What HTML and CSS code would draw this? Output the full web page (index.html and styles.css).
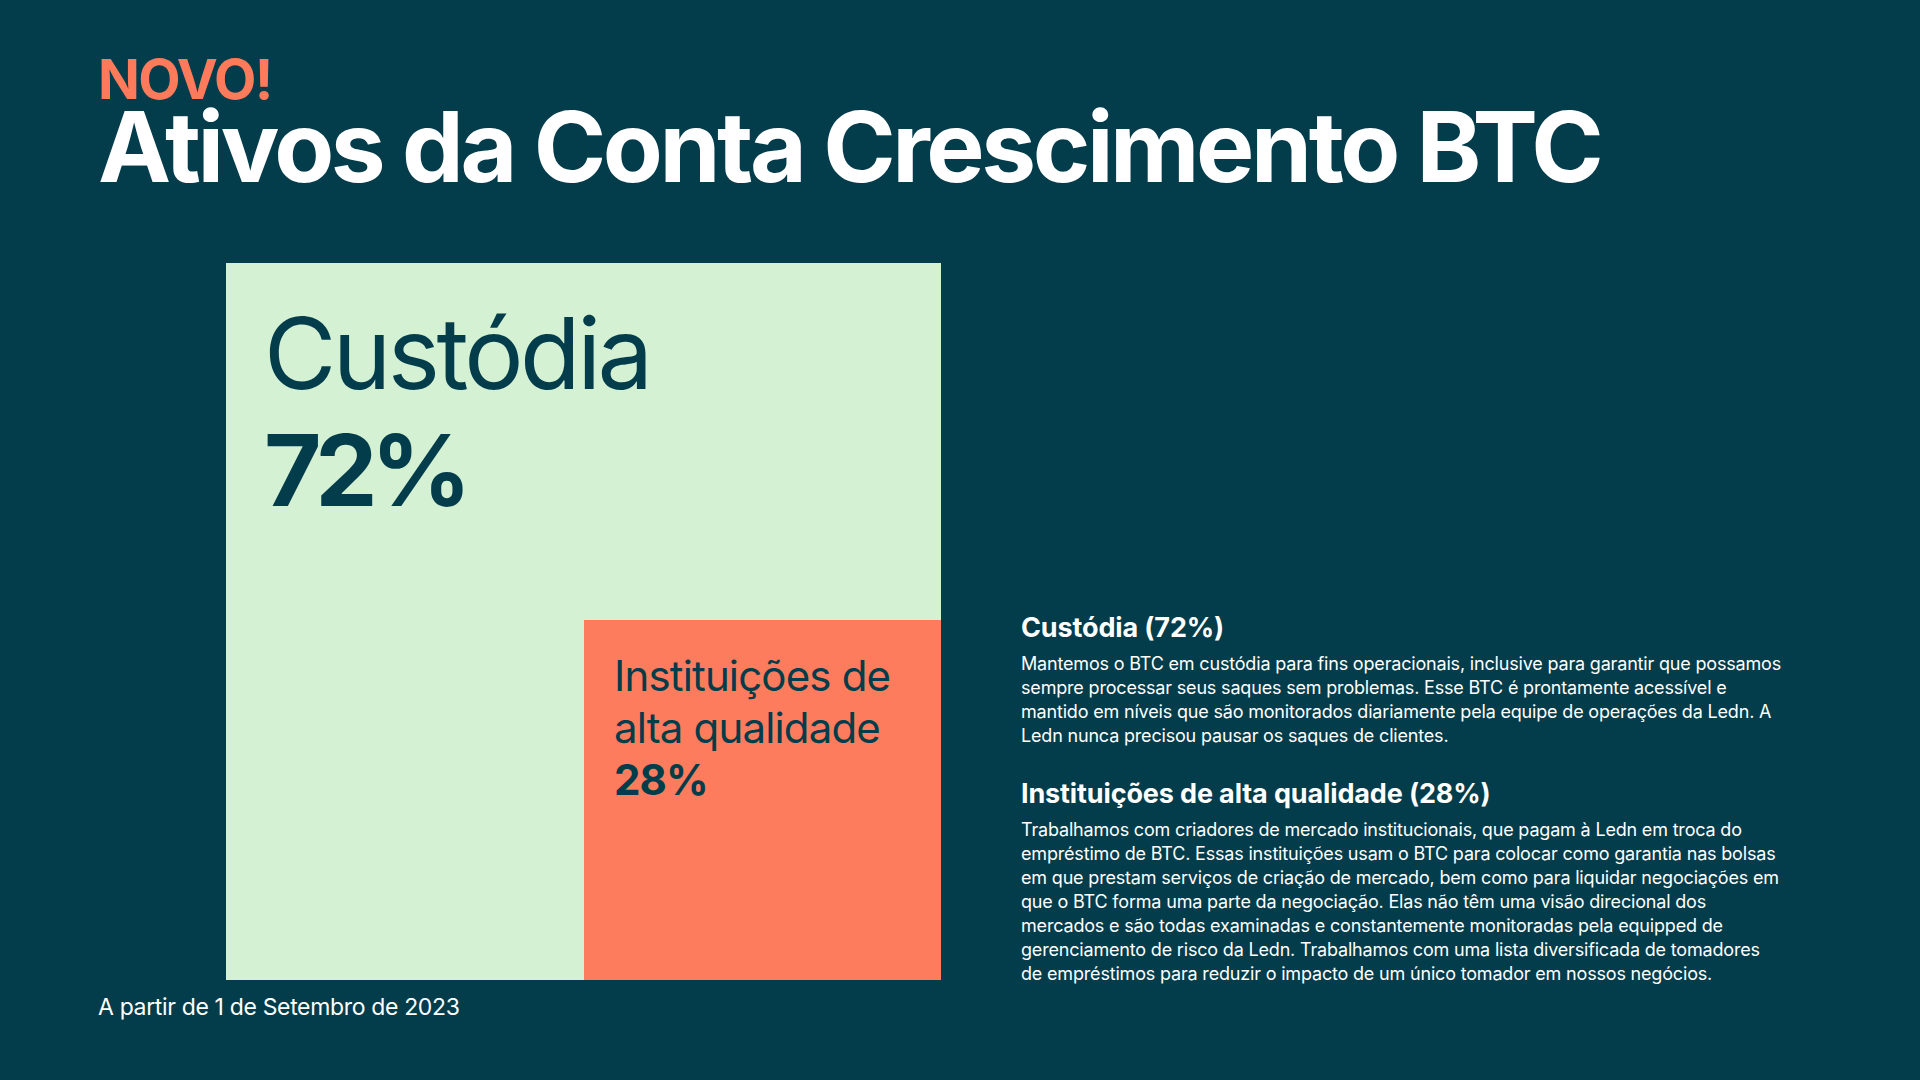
FILE: index.html
```html
<!DOCTYPE html>
<html lang="pt-BR">
<head>
<meta charset="utf-8">
<title>Ativos da Conta Crescimento BTC</title>
<link rel="stylesheet" href="styles.css">
</head>
<body>
<div class="page">
  <header class="header">
    <div class="badge">NOVO!</div>
    <h1 class="title">Ativos da Conta Crescimento BTC</h1>
  </header>
  <main class="main">
    <div class="chart">
      <div class="custody-label">
        <div class="label-name">Custódia</div>
        <div class="label-pct">72%</div>
      </div>
      <div class="inst">
        <div class="inst-name">Instituições de<br>alta qualidade</div>
        <div class="inst-pct">28%</div>
      </div>
    </div>
    <div class="notes">
      <h2 class="note-title">Custódia (72%)</h2>
      <p class="note-text">Mantemos o BTC em custódia para fins operacionais, inclusive para garantir que possamos<br>sempre processar seus saques sem problemas. Esse BTC é prontamente acessível e<br>mantido em níveis que são monitorados diariamente pela equipe de operações da Ledn. A<br>Ledn nunca precisou pausar os saques de clientes.</p>
      <h2 class="note-title">Instituições de alta qualidade (28%)</h2>
      <p class="note-text last">Trabalhamos com criadores de mercado institucionais, que pagam à Ledn em troca do<br>empréstimo de BTC. Essas instituições usam o BTC para colocar como garantia nas bolsas<br>em que prestam serviços de criação de mercado, bem como para liquidar negociações em<br>que o BTC forma uma parte da negociação. Elas não têm uma visão direcional dos<br>mercados e são todas examinadas e constantemente monitoradas pela equipped de<br>gerenciamento de risco da Ledn. Trabalhamos com uma lista diversificada de tomadores<br>de empréstimos para reduzir o impacto de um único tomador em nossos negócios.</p>
    </div>
  </main>
  <footer class="footer">A partir de 1 de Setembro de 2023</footer>
</div>
</body>
</html>
```
FILE: styles.css
```css
html, body {
  margin: 0;
  padding: 0;
}
body {
  background: #033c4a;
  width: 1920px;
  height: 1080px;
  overflow: hidden;
  font-family: Inter, "Liberation Sans", sans-serif;
  color: #ffffff;
}
.page {
  padding: 55px 0 0 98px;
}
.header {
  display: flex;
  flex-direction: column;
}
.badge {
  font-size: 55px;
  line-height: 48px;
  font-weight: 700;
  color: #fd7b5a;
  letter-spacing: -0.03em;
}
.title {
  margin: 4px 0 0 0;
  font-size: 98px;
  line-height: 80px;
  font-weight: 700;
  letter-spacing: -0.035em;
}
.main {
  display: flex;
  align-items: flex-end;
  margin-top: 76px;
  margin-left: 128px;
}
.chart {
  display: grid;
  grid-template-columns: 358px 357px;
  grid-template-rows: 357px 360px;
  background: #d4f1d4;
  color: #033c4a;
  flex: none;
}
.custody-label {
  grid-column: 1 / 3;
  grid-row: 1;
  padding: 32px 0 0 38px;
}
.label-name {
  font-size: 99px;
  line-height: 117px;
  font-weight: 400;
  letter-spacing: -0.036em;
}
.label-pct {
  font-size: 99px;
  line-height: 117px;
  font-weight: 700;
  letter-spacing: -0.065em;
}
.inst {
  grid-column: 2;
  grid-row: 2;
  background: #fd7c5d;
  padding: 30px 0 0 30px;
}
.inst-name {
  font-size: 42px;
  line-height: 52px;
  font-weight: 400;
  letter-spacing: -0.02em;
}
.inst-pct {
  font-size: 42px;
  line-height: 52px;
  font-weight: 700;
  letter-spacing: -0.02em;
}
.notes {
  margin-left: 80px;
  width: 780px;
  display: flex;
  flex-direction: column;
  margin-bottom: -6px;
}
.note-title {
  margin: 0 0 8px 0;
  font-size: 27px;
  line-height: 32px;
  font-weight: 700;
  letter-spacing: -0.005em;
}
.note-text {
  margin: 0 0 30px 0;
  font-size: 18px;
  line-height: 24px;
  font-weight: 400;
  letter-spacing: -0.01em;
  white-space: nowrap;
}
.note-text.last {
  margin-bottom: 0;
}
.footer {
  margin-top: 15px;
  font-size: 23px;
  line-height: 24px;
  letter-spacing: -0.015em;
}
```
